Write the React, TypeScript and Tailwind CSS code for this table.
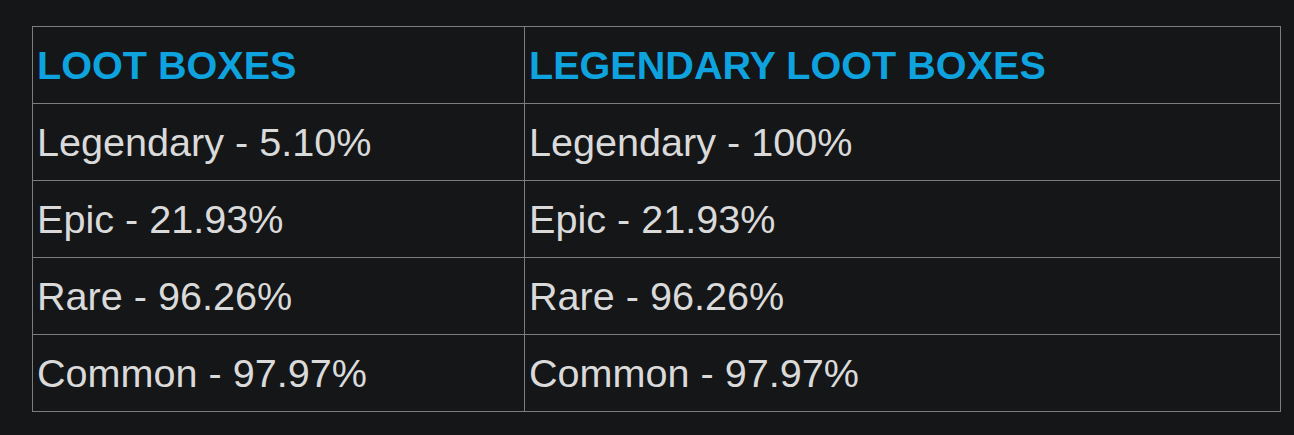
import React from 'react';

const rows = [
  ['Legendary - 5.10%', 'Legendary - 100%'],
  ['Epic - 21.93%', 'Epic - 21.93%'],
  ['Rare - 96.26%', 'Rare - 96.26%'],
  ['Common - 97.97%', 'Common - 97.97%'],
];

const cell = 'border border-[#7d7d7d] pl-[4px] pr-[2px] py-0 h-[77px] leading-[76px] text-left align-middle whitespace-nowrap';

const App: React.FC = () => {
  return (
    <div className="min-h-[435px] w-full bg-[#151618] pt-[26px] pl-[32px] font-['Liberation_Sans',Arial,sans-serif]">
      <table className="border-collapse w-[1249px] text-[39.6px]">
        <thead>
          <tr>
            <th className={`${cell} w-[492px] font-bold text-[#0ea2df]`}>LOOT BOXES</th>
            <th className={`${cell} font-bold text-[#0ea2df]`}>LEGENDARY LOOT BOXES</th>
          </tr>
        </thead>
        <tbody>
          {rows.map(([a, b]) => (
            <tr key={a}>
              <td className={`${cell} text-[#dadada]`}>{a}</td>
              <td className={`${cell} text-[#dadada]`}>{b}</td>
            </tr>
          ))}
        </tbody>
      </table>
    </div>
  );
};

export default App;
